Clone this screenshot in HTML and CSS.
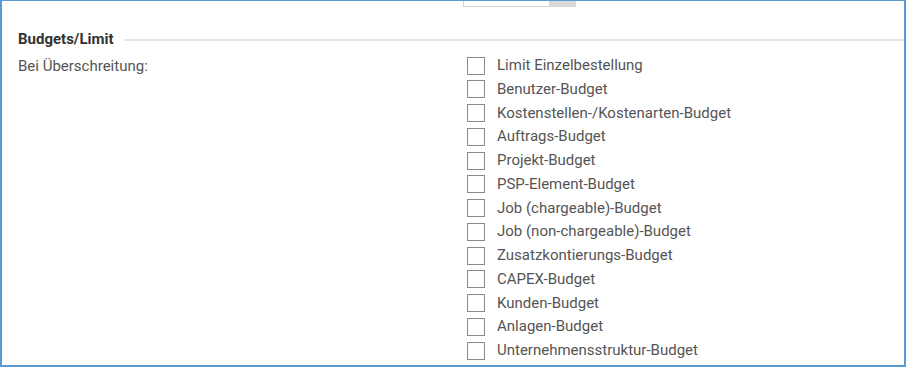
FILE: index.html
```html
<!DOCTYPE html>
<html lang="de">
  <head>
    <meta charset="UTF-8">
    <title>Budgets/Limit</title>
    <link rel="stylesheet" href="styles.css">
  </head>
  <body>
    <div class="frame">
      <div class="prev-row">
        <div class="prev-field">
          <span class="prev-input"></span>
          <span class="prev-button"></span>
        </div>
      </div>

      <div class="section-head">
        <span class="section-title">Budgets/Limit</span>
        <span class="section-rule"></span>
      </div>

      <div class="form-row">
        <div class="row-label">Bei Überschreitung:</div>
        <div class="check-list">
          <label class="check"><span class="box"></span>Limit Einzelbestellung</label>
          <label class="check"><span class="box"></span>Benutzer-Budget</label>
          <label class="check"><span class="box"></span>Kostenstellen-/Kostenarten-Budget</label>
          <label class="check"><span class="box"></span>Auftrags-Budget</label>
          <label class="check"><span class="box"></span>Projekt-Budget</label>
          <label class="check"><span class="box"></span>PSP-Element-Budget</label>
          <label class="check"><span class="box"></span>Job (chargeable)-Budget</label>
          <label class="check"><span class="box"></span>Job (non-chargeable)-Budget</label>
          <label class="check"><span class="box"></span>Zusatzkontierungs-Budget</label>
          <label class="check"><span class="box"></span>CAPEX-Budget</label>
          <label class="check"><span class="box"></span>Kunden-Budget</label>
          <label class="check"><span class="box"></span>Anlagen-Budget</label>
          <label class="check"><span class="box"></span>Unternehmensstruktur-Budget</label>
        </div>
      </div>
    </div>
  </body>
</html>
```

FILE: styles.css
```css
html, body {
	margin: 0;
	padding: 0;
	background: #ffffff;
}
body {
	font-family: Roboto, "Liberation Sans", sans-serif;
	font-size: 15px;
	color: #555555;
}
.frame {
	box-sizing: border-box;
	width: 906px;
	height: 367px;
	border-style: solid;
	border-color: #5b9bd5;
	border-width: 1px 2px 2px 2px;
	overflow: hidden;
}

/* bottom edge of the field above, scrolled off */
.prev-row {
	height: 6px;
	padding-left: 461px;
}
.prev-field {
	display: flex;
	height: 6px;
}
.prev-input {
	box-sizing: border-box;
	width: 86px;
	border-left: 1px solid #d6d6d6;
	border-bottom: 1px solid #d6d6d6;
	background: #ffffff;
}
.prev-button {
	width: 27px;
	background: #d9d9d9;
}

.section-head {
	display: flex;
	align-items: center;
	margin-top: 22px;
	padding-left: 16px;
	height: 20px;
}
.section-title {
	font-weight: bold;
	color: #333333;
	line-height: 20px;
}
.section-rule {
	flex: 1;
	height: 2px;
	margin-left: 11px;
	margin-top: 2px;
	background: #e3e3e3;
}

.form-row {
	display: flex;
	padding-left: 16px;
	margin-top: 6px;
}
.row-label {
	width: 449px;
	line-height: 20px;
	padding-top: 1px;
}
.check-list {
	display: flex;
	flex-direction: column;
	gap: 3.75px;
}
.check {
	display: flex;
	align-items: center;
	height: 20px;
	line-height: 20px;
}
.box {
	box-sizing: border-box;
	width: 18px;
	height: 18px;
	border: 1px solid #8a8a8a;
	background: #ffffff;
	margin-right: 12px;
	margin-top: 1px;
}
```
